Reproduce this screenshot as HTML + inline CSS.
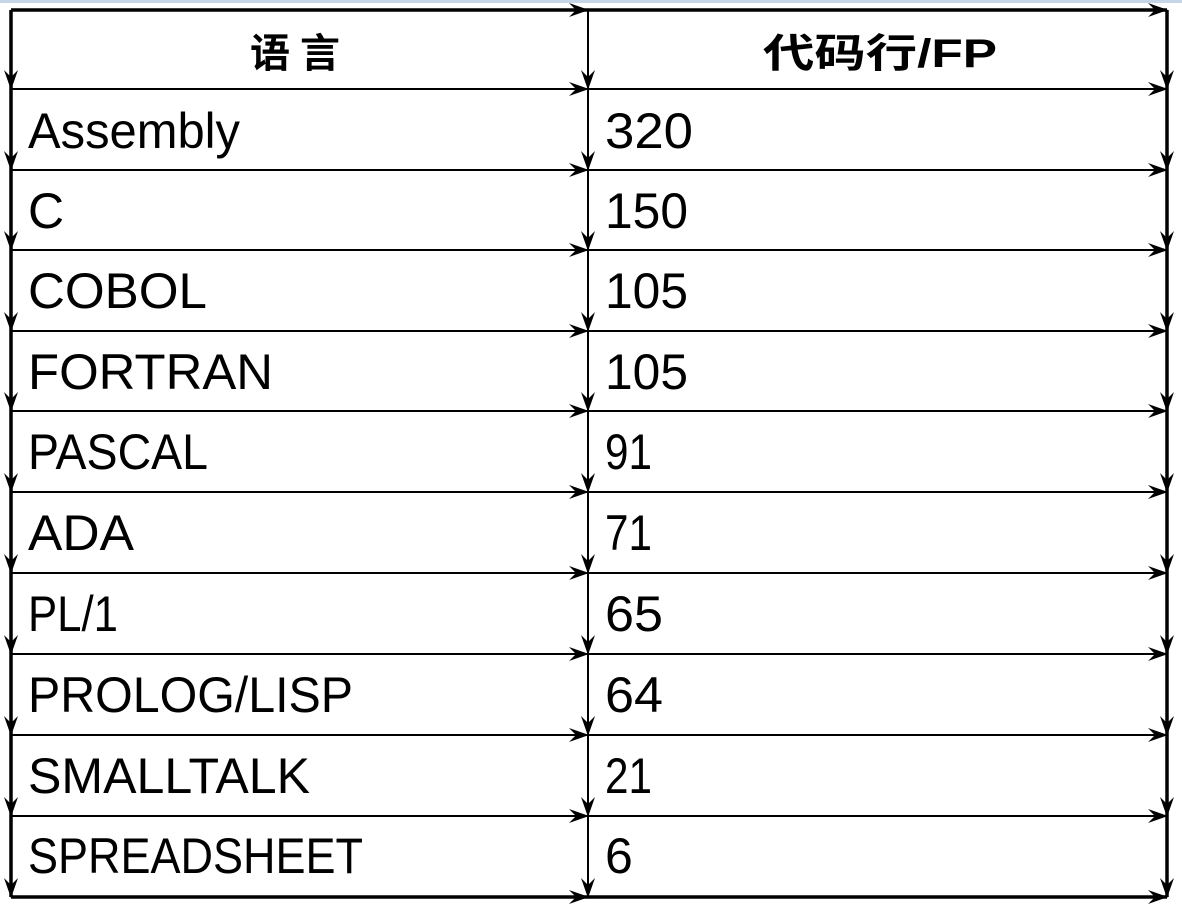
<!DOCTYPE html>
<html><head><meta charset="utf-8"><style>
html,body{margin:0;padding:0;background:#fff;width:1182px;height:912px;overflow:hidden}
svg{display:block}
text{font-family:"Liberation Sans","Noto Sans CJK SC",sans-serif;fill:#000}
</style></head><body>
<svg width="1182" height="912" viewBox="0 0 1182 912" xmlns="http://www.w3.org/2000/svg">
<defs>
<marker id="ar" viewBox="0 0 20 14" refX="19" refY="7" markerWidth="20" markerHeight="14" markerUnits="userSpaceOnUse" orient="auto">
<path d="M0,0 L20,7 L0,14 L7,7 Z" fill="#000"/>
</marker>
</defs>
<rect x="0" y="0" width="1182" height="3" fill="#c5d6e6"/>
<g stroke="#000" fill="none">
<line x1="11" y1="10" x2="588" y2="10" stroke-width="3.5" marker-end="url(#ar)"/>
<line x1="588" y1="10" x2="1167" y2="10" stroke-width="3.5" marker-end="url(#ar)"/>
<g stroke-width="2">
<line x1="11" y1="89" x2="588" y2="89" marker-end="url(#ar)"/><line x1="588" y1="89" x2="1167" y2="89" marker-end="url(#ar)"/>
<line x1="11" y1="170" x2="588" y2="170" marker-end="url(#ar)"/><line x1="588" y1="170" x2="1167" y2="170" marker-end="url(#ar)"/>
<line x1="11" y1="250" x2="588" y2="250" marker-end="url(#ar)"/><line x1="588" y1="250" x2="1167" y2="250" marker-end="url(#ar)"/>
<line x1="11" y1="331" x2="588" y2="331" marker-end="url(#ar)"/><line x1="588" y1="331" x2="1167" y2="331" marker-end="url(#ar)"/>
<line x1="11" y1="411" x2="588" y2="411" marker-end="url(#ar)"/><line x1="588" y1="411" x2="1167" y2="411" marker-end="url(#ar)"/>
<line x1="11" y1="492" x2="588" y2="492" marker-end="url(#ar)"/><line x1="588" y1="492" x2="1167" y2="492" marker-end="url(#ar)"/>
<line x1="11" y1="573" x2="588" y2="573" marker-end="url(#ar)"/><line x1="588" y1="573" x2="1167" y2="573" marker-end="url(#ar)"/>
<line x1="11" y1="654" x2="588" y2="654" marker-end="url(#ar)"/><line x1="588" y1="654" x2="1167" y2="654" marker-end="url(#ar)"/>
<line x1="11" y1="735" x2="588" y2="735" marker-end="url(#ar)"/><line x1="588" y1="735" x2="1167" y2="735" marker-end="url(#ar)"/>
<line x1="11" y1="816" x2="588" y2="816" marker-end="url(#ar)"/><line x1="588" y1="816" x2="1167" y2="816" marker-end="url(#ar)"/>
</g>
<line x1="11" y1="897" x2="588" y2="897" stroke-width="3.5" marker-end="url(#ar)"/>
<line x1="588" y1="897" x2="1167" y2="897" stroke-width="3.5" marker-end="url(#ar)"/>
</g>
<g stroke="#000" fill="none">
<g id="vl" stroke-width="3.5">
<line x1="11" y1="10" x2="11" y2="89" marker-end="url(#ar)"/>
<line x1="11" y1="89" x2="11" y2="170" marker-end="url(#ar)"/>
<line x1="11" y1="170" x2="11" y2="250" marker-end="url(#ar)"/>
<line x1="11" y1="250" x2="11" y2="331" marker-end="url(#ar)"/>
<line x1="11" y1="331" x2="11" y2="411" marker-end="url(#ar)"/>
<line x1="11" y1="411" x2="11" y2="492" marker-end="url(#ar)"/>
<line x1="11" y1="492" x2="11" y2="573" marker-end="url(#ar)"/>
<line x1="11" y1="573" x2="11" y2="654" marker-end="url(#ar)"/>
<line x1="11" y1="654" x2="11" y2="735" marker-end="url(#ar)"/>
<line x1="11" y1="735" x2="11" y2="816" marker-end="url(#ar)"/>
<line x1="11" y1="816" x2="11" y2="897" marker-end="url(#ar)"/>
</g>
<use href="#vl" transform="translate(1156,0)"/>
<g transform="translate(577,0)" stroke-width="2">
<line x1="11" y1="10" x2="11" y2="89" marker-end="url(#ar)"/>
<line x1="11" y1="89" x2="11" y2="170" marker-end="url(#ar)"/>
<line x1="11" y1="170" x2="11" y2="250" marker-end="url(#ar)"/>
<line x1="11" y1="250" x2="11" y2="331" marker-end="url(#ar)"/>
<line x1="11" y1="331" x2="11" y2="411" marker-end="url(#ar)"/>
<line x1="11" y1="411" x2="11" y2="492" marker-end="url(#ar)"/>
<line x1="11" y1="492" x2="11" y2="573" marker-end="url(#ar)"/>
<line x1="11" y1="573" x2="11" y2="654" marker-end="url(#ar)"/>
<line x1="11" y1="654" x2="11" y2="735" marker-end="url(#ar)"/>
<line x1="11" y1="735" x2="11" y2="816" marker-end="url(#ar)"/>
<line x1="11" y1="816" x2="11" y2="897" marker-end="url(#ar)"/>
</g>
</g>
<text x="250" y="67" font-size="40" font-weight="bold" textLength="90" lengthAdjust="spacing">语 言</text>
<text x="763" y="67" font-size="40" font-weight="bold" textLength="234" lengthAdjust="spacingAndGlyphs">代码行/FP</text>
<g font-size="50">
<text x="28" y="148" textLength="212" lengthAdjust="spacingAndGlyphs">Assembly</text>
<text x="28" y="228">C</text>
<text x="28" y="308" textLength="179" lengthAdjust="spacingAndGlyphs">COBOL</text>
<text x="28" y="389" textLength="245" lengthAdjust="spacingAndGlyphs">FORTRAN</text>
<text x="28" y="469" textLength="180" lengthAdjust="spacingAndGlyphs">PASCAL</text>
<text x="28" y="550" textLength="106" lengthAdjust="spacingAndGlyphs">ADA</text>
<text x="28" y="631" textLength="90" lengthAdjust="spacingAndGlyphs">PL/1</text>
<text x="28" y="712" textLength="325" lengthAdjust="spacingAndGlyphs">PROLOG/LISP</text>
<text x="28" y="793" textLength="282" lengthAdjust="spacingAndGlyphs">SMALLTALK</text>
<text x="28" y="873" textLength="335" lengthAdjust="spacingAndGlyphs">SPREADSHEET</text>
<text x="605" y="148" textLength="88" lengthAdjust="spacingAndGlyphs">320</text>
<text x="605" y="228" textLength="83" lengthAdjust="spacingAndGlyphs">150</text>
<text x="605" y="308" textLength="83" lengthAdjust="spacingAndGlyphs">105</text>
<text x="605" y="389" textLength="83" lengthAdjust="spacingAndGlyphs">105</text>
<text x="605" y="469" textLength="47" lengthAdjust="spacingAndGlyphs">91</text>
<text x="605" y="550" textLength="47" lengthAdjust="spacingAndGlyphs">71</text>
<text x="605" y="631" textLength="58" lengthAdjust="spacingAndGlyphs">65</text>
<text x="605" y="712" textLength="58" lengthAdjust="spacingAndGlyphs">64</text>
<text x="605" y="793" textLength="47" lengthAdjust="spacingAndGlyphs">21</text>
<text x="605" y="873">6</text>
</g>
</svg>
</body></html>
